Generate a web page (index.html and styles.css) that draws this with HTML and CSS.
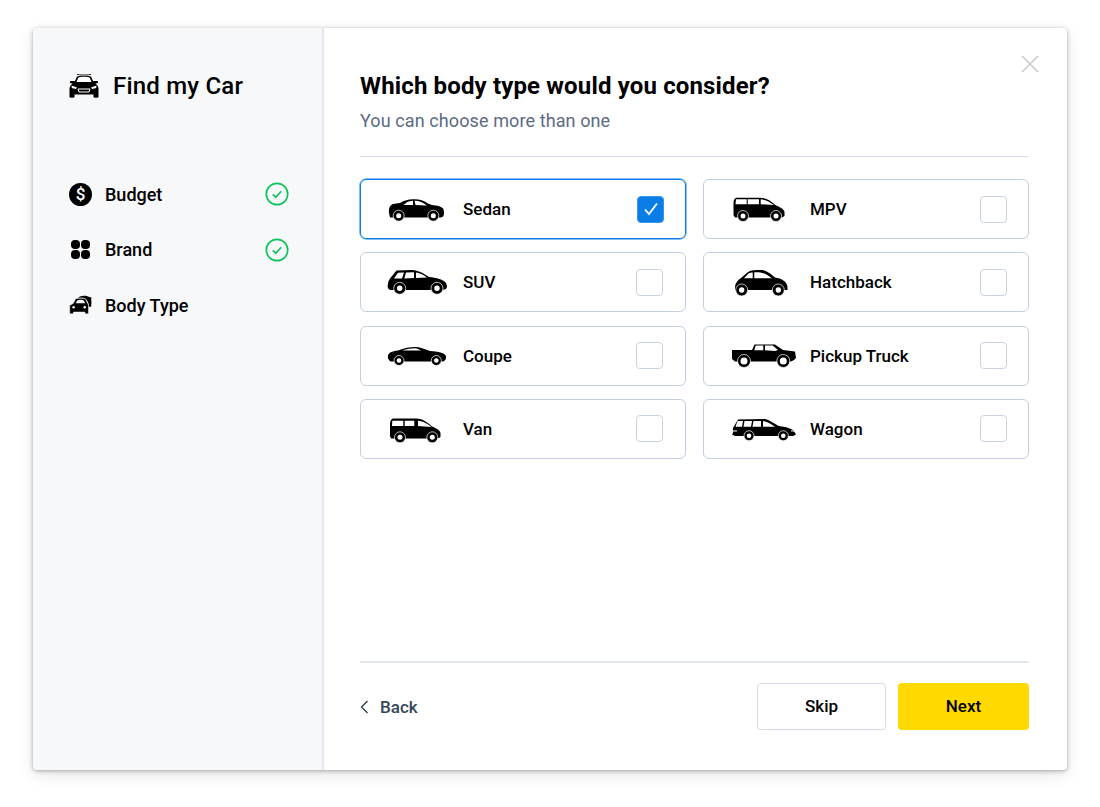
FILE: index.html
```html
<!DOCTYPE html>
<html lang="en">
<head>
  <meta charset="UTF-8" />
  <title>Find my Car</title>
  <link rel="stylesheet" href="styles.css">
</head>
<body>
  <div class="modal">
    <aside class="sidebar">
      <div class="logo">
        <svg class="logo-icon" width="30" height="24" viewBox="0 0 30 24">
          <path d="M6 7 L8 2.5 C10 1 20 1 22 2.5 L24 7 L28 7 C29 7 29.5 8 29 9 L26.5 9.5 C28.5 11 29.5 13 29.5 15 L29.5 23 C29.5 24 24.5 24 24.5 23 L24.5 20.5 L5.5 20.5 L5.5 23 C5.5 24 0.5 24 0.5 23 L0.5 15 C0.5 13 1.5 11 3.5 9.5 L1 9 C0.5 8 1 7 2 7 Z" fill="#000"/>
          <path d="M7.5 8 L9.3 3.5 C11 2.5 19 2.5 20.7 3.5 L22.5 8 Z" fill="#fff"/>
          <path d="M8 0.7 C11 -0.2 19 -0.2 22 0.7" fill="none" stroke="#000" stroke-width="0.8"/>
          <path d="M2.5 11.5 L8 13.5 L7 15 L2.8 14 Z M27.5 11.5 L22 13.5 L23 15 L27.2 14 Z" fill="#fff"/>
          <path d="M9 15 L21 15 L20 18 L10 18 Z" fill="none" stroke="#fff" stroke-width="1"/>
        </svg>
        <span>Find my Car</span>
      </div>

      <nav class="steps">
        <div class="step">
          <span class="step-icon"><span class="dollar">$</span></span>
          <span class="step-label">Budget</span>
          <svg class="step-check" width="24" height="24" viewBox="0 0 24 24">
            <circle cx="12" cy="12" r="10.7" fill="none" stroke="#10c45c" stroke-width="1.7"/>
            <path d="M7.8 12.3 L10.8 15.2 L16.2 9.2" fill="none" stroke="#10c45c" stroke-width="1.7"/>
          </svg>
        </div>
        <div class="step">
          <span class="step-icon">
            <span class="tiles"><i></i><i></i><i></i><i></i></span>
          </span>
          <span class="step-label">Brand</span>
          <svg class="step-check" width="24" height="24" viewBox="0 0 24 24">
            <circle cx="12" cy="12" r="10.7" fill="none" stroke="#10c45c" stroke-width="1.7"/>
            <path d="M7.8 12.3 L10.8 15.2 L16.2 9.2" fill="none" stroke="#10c45c" stroke-width="1.7"/>
          </svg>
        </div>
        <div class="step">
          <span class="step-icon">
            <svg width="26" height="24" viewBox="0 0 26 24">
              <path d="M10 4 C13 1 19 0.8 23 3 L25.5 3.5 L25 6 C25.5 8 25.5 11 25 14 L22.5 14 C22.5 10 21 7 18.5 5 C16 3.5 13 3.5 10 4 Z" fill="#000"/>
              <path d="M5 10 L7.5 5 C10 4 16 4 18.5 5 L21 10 L22 12 L22 22 L18 22 L18 20 L5 20 L5 22 L0.8 22 L0.8 12.5 Z" fill="#000" stroke="#f7f8fa" stroke-width="0.6"/>
              <path d="M7.5 10 L9.3 6.8 C11 6 15 6 16.7 6.8 L18.5 10 Z" fill="#f7f8fa"/>
              <circle cx="5.2" cy="14.5" r="1.4" fill="#f7f8fa"/>
              <circle cx="17.8" cy="14.5" r="1.4" fill="#f7f8fa"/>
            </svg>
          </span>
          <span class="step-label">Body Type</span>
        </div>
      </nav>
    </aside>

    <main class="content">
      <svg class="close" width="18" height="18" viewBox="0 0 18 18">
        <path d="M1 1 L17 17 M17 1 L1 17" stroke="#c9cbce" stroke-width="1.7"/>
      </svg>

      <header class="head">
        <h1>Which body type would you consider?</h1>
        <p>You can choose more than one</p>
      </header>

      <div class="options">
        <div class="option option-selected">
          <svg class="car" width="66" height="32" viewBox="0 0 66 32">
            <path d="M7 20 C6.5 15 8 12 11 11 L18 10 C22 7.5 26 6.3 31 6.3 C37 6 41 7 46 10.5 L50 12 C55 12.5 60 13.5 61.5 16 L62 20 C62 23 61 24 59 24.5 L8 24.5 Z" fill="#000"/>
            <path d="M21.5 12 L25 9.2 C27 8.2 29 7.8 31 7.7 L31 12 Z M32.5 7.7 C37 7.6 41 9.5 45 12.5 L33.5 12 Z" fill="#fff"/>
            <circle cx="16.7" cy="22.7" r="5.5" fill="#000" stroke="#fff"/><circle cx="16.7" cy="22.7" r="2.5" fill="#fff"/>
            <circle cx="51.3" cy="22.7" r="5.5" fill="#000" stroke="#fff"/><circle cx="51.3" cy="22.7" r="2.5" fill="#fff"/>
          </svg>
          <span class="option-label">Sedan</span>
          <span class="box box-checked">
            <svg width="16" height="14" viewBox="0 0 16 14"><path d="M2 7.5 L6 12 L14 1.5" fill="none" stroke="#fff" stroke-width="1.8"/></svg>
          </span>
        </div>

        <div class="option option-right">
          <svg class="car" width="72" height="32" viewBox="0 0 72 32">
            <path d="M8.5 11 C8.5 7 9.5 4.7 12 4.7 L35 4.7 C41 4.7 46 8 51 12.5 C55 14 59 16 59.5 19 L59.5 23 L57 24.5 L10 24.5 L8.5 22 Z" fill="#000"/>
            <path d="M11 6.3 L21.7 6.3 L21.7 11.3 L10.5 11.3 Z M22.7 6.3 L34 6.3 L34 11.3 L22.7 11.3 Z M35.7 6.3 C41 6.5 45 9 49 12 L35.7 11.3 Z" fill="#fff"/>
            <circle cx="18" cy="23" r="5.5" fill="#000" stroke="#fff"/><circle cx="18" cy="23" r="2.5" fill="#fff"/>
            <circle cx="51" cy="23" r="5.5" fill="#000" stroke="#fff"/><circle cx="51" cy="23" r="2.5" fill="#fff"/>
          </svg>
          <span class="option-label">MPV</span>
          <span class="box"></span>
        </div>

        <div class="option">
          <svg class="car" width="66" height="32" viewBox="0 0 66 32">
            <path d="M6 18 C6 15 8 12 10 10 L14.5 4.5 L30 4 C38 4.5 42 8 47 11 C54 11.5 62 13.5 64 17 L65 20 C65 23 63 23.5 61 24 L8 24 C6 23 5 21 6 18 Z" fill="#000"/>
            <path d="M12 12.5 L16 6.8 L22 6.5 L20 12.5 Z M24 6.5 L32 6.2 L32 12 L22.3 12.5 Z M34 6.4 C38 7 42 9 45 11.5 L34 12 Z" fill="#fff"/>
            <circle cx="17.7" cy="22.3" r="6" fill="#000" stroke="#fff"/><circle cx="17.7" cy="22.3" r="2.7" fill="#fff"/>
            <circle cx="55" cy="22.3" r="6" fill="#000" stroke="#fff"/><circle cx="55" cy="22.3" r="2.7" fill="#fff"/>
          </svg>
          <span class="option-label">SUV</span>
          <span class="box"></span>
        </div>

        <div class="option option-right">
          <svg class="car" width="72" height="32" viewBox="0 0 72 32">
            <path d="M10 22 C10 17 13 14 16 12 L23 6 C26 4 31 4 36 4 C41 4 46 8 50 11.5 C56 12.5 62 15 62.5 21 L62.5 24 L10 24 Z" fill="#000"/>
            <path d="M19 12.3 L23.5 7.5 C25 6.7 26.5 6.5 27.7 6.5 L27.7 12.3 Z M29.3 6.3 C36 5.7 41 7.5 46.7 12.3 L29.3 12.3 Z" fill="#fff"/>
            <circle cx="16.7" cy="24" r="6" fill="#000" stroke="#fff"/><circle cx="16.7" cy="24" r="2.7" fill="#fff"/>
            <circle cx="53.3" cy="24" r="6" fill="#000" stroke="#fff"/><circle cx="53.3" cy="24" r="2.7" fill="#fff"/>
          </svg>
          <span class="option-label">Hatchback</span>
          <span class="box"></span>
        </div>

        <div class="option">
          <svg class="car" width="66" height="32" viewBox="0 0 66 32">
            <path d="M6 16 C6 13 10 11 16 10.5 C22 8 28 7 33 7 C38 7 42 9 48 11 C56 11.5 63 13 64 16 C64.5 19 63 21 61 21.5 L9 21.5 C7 21 5.5 18 6 16 Z" fill="#000"/>
            <path d="M20 10.5 C25 9 30 8.3 33 8.3 C35 8.3 37 9.5 39 10.5 Z" fill="#fff"/>
            <circle cx="17" cy="20.5" r="5" fill="#000" stroke="#fff"/><circle cx="17" cy="20.5" r="2.3" fill="#fff"/>
            <circle cx="54.3" cy="20.5" r="5" fill="#000" stroke="#fff"/><circle cx="54.3" cy="20.5" r="2.3" fill="#fff"/>
          </svg>
          <span class="option-label">Coupe</span>
          <span class="box"></span>
        </div>

        <div class="option option-right">
          <svg class="car" width="72" height="32" viewBox="0 0 72 32">
            <path d="M7 10 L27 10 L29.5 4.5 L50 4.5 L58 10 L70 11.5 L71 18 L69 20 L66 21.5 L10 21.5 L7 19 Z" fill="#000"/>
            <path d="M30.7 5.6 L38.3 5.6 L38.3 10.3 L29.3 10.3 Z M40 5.6 L47.5 5.6 L53 10 L50 11 L40 10.3 Z" fill="#fff"/>
            <circle cx="19" cy="21" r="6.5" fill="#000" stroke="#fff"/><circle cx="19" cy="21" r="3.5" fill="#fff"/>
            <circle cx="58.3" cy="21" r="6.5" fill="#000" stroke="#fff"/><circle cx="58.3" cy="21" r="3.5" fill="#fff"/>
          </svg>
          <span class="option-label">Pickup Truck</span>
          <span class="box"></span>
        </div>

        <div class="option">
          <svg class="car" width="66" height="32" viewBox="0 0 66 32">
            <path d="M8 12 C8 8 9 5.5 12 5.5 L34 5.5 C40 5.5 45 9 50 13.5 C54 15 58 17 58.5 20 L58.5 24 L56 25.5 L9 25.5 L8 23 Z" fill="#000"/>
            <path d="M10.3 7.7 L21.3 7.7 L21.3 13 L10 13 Z M22.7 7.7 L32.3 7.7 L32.3 13 L22.7 13 Z M36 7.7 C41 8 46 11 49.5 14 L36 13 Z" fill="#fff"/>
            <circle cx="18" cy="24.3" r="5.5" fill="#000" stroke="#fff"/><circle cx="18" cy="24.3" r="2.5" fill="#fff"/>
            <circle cx="50.3" cy="24.3" r="5.5" fill="#000" stroke="#fff"/><circle cx="50.3" cy="24.3" r="2.5" fill="#fff"/>
          </svg>
          <span class="option-label">Van</span>
          <span class="box"></span>
        </div>

        <div class="option option-right">
          <svg class="car" width="72" height="32" viewBox="0 0 72 32">
            <path d="M8 20 L8 15 L13 6.5 L40 6 C45 7 50 11 54 13 C62 14 69 16 70 20 L71 21.5 L68 23 L10 23 L7 21.5 Z" fill="#000"/>
            <path d="M12.5 8 L18 8 L17 13.7 L10.5 13.7 Z M19.5 8 L27 8 L26 13.7 L18.5 13.7 Z M28.5 8 L36 8 L36 13.7 L27.5 13.7 Z M38 8 C42 8.5 46 11 50 13.7 L38 13.7 Z" fill="#fff"/>
            <path d="M7 18 L12 18 M66 18 L71 18" stroke="#fff"/>
            <circle cx="24" cy="22.7" r="5" fill="#000" stroke="#fff"/><circle cx="24" cy="22.7" r="2.3" fill="#fff"/>
            <circle cx="58.3" cy="22.7" r="5" fill="#000" stroke="#fff"/><circle cx="58.3" cy="22.7" r="2.3" fill="#fff"/>
          </svg>
          <span class="option-label">Wagon</span>
          <span class="box"></span>
        </div>
      </div>

      <footer class="foot">
        <a class="back">
          <svg width="9" height="14" viewBox="0 0 9 14"><path d="M7.5 1 L1.5 7 L7.5 13" fill="none" stroke="#2d3a4c" stroke-width="1.3"/></svg>
          <span>Back</span>
        </a>
        <div class="actions">
          <button type="button" class="btn btn-skip">Skip</button>
          <button type="button" class="btn btn-next">Next</button>
        </div>
      </footer>
    </main>
  </div>
</body>
</html>
```

FILE: styles.css
```css
body {
  font-family: Roboto, 'Liberation Sans', sans-serif;
  background: #fff;
  color: #000;
  margin: 0;
  padding: 28px 33px 37px;
}

.modal {
  display: flex;
  height: 742px;
  background: #fff;
  border-radius: 4px;
  box-shadow: 0 1px 4px rgba(0, 0, 0, 0.3), 0 5px 16px rgba(0, 0, 0, 0.1);
}

/* Left column */
.sidebar {
  box-sizing: border-box;
  width: 291px;
  padding: 46px 33px 0 36px;
  background: #f7f8fa;
  border-right: 2px solid #e2e7ee;
  border-radius: 4px 0 0 4px;
}

.logo {
  display: flex;
  align-items: center;
  gap: 14px;
  height: 24px;
  font-size: 24px;
  font-weight: 500;
  letter-spacing: 0.2px;
}

.logo-icon {
  flex: none;
}

.steps {
  display: flex;
  flex-direction: column;
  gap: 23.5px;
  margin-top: 80px;
}

.step {
  display: flex;
  align-items: center;
  height: 32px;
}

.step-icon {
  display: flex;
  justify-content: center;
  width: 23px;
  margin-right: 13px;
}

.step-label {
  flex: 1;
  font-size: 18px;
  font-weight: 500;
}

.step-check {
  flex: none;
}

.dollar {
  width: 23px;
  height: 23px;
  border-radius: 50%;
  background: #000;
  color: #fff;
  font-size: 17px;
  font-weight: 500;
  line-height: 23px;
  text-align: center;
}

.tiles {
  display: grid;
  grid-template-columns: 9px 9px;
  gap: 1.5px;
}

.tiles i {
  display: block;
  height: 9px;
  background: #000;
  border-radius: 4px;
}

/* Right column */
.content {
  position: relative;
  flex: 1;
  display: flex;
  flex-direction: column;
  padding: 44px 38px 40px 36px;
}

.close {
  position: absolute;
  top: 27px;
  right: 28px;
}

.head {
  padding-bottom: 23px;
  margin-right: 1px;
  border-bottom: 1px solid #d5dde9;
}

.head h1 {
  margin: 0 0 9px;
  font-size: 24px;
  line-height: 28px;
  font-weight: 700;
  letter-spacing: 0.15px;
}

.head p {
  margin: 0;
  font-size: 18px;
  line-height: 24px;
  letter-spacing: 0.1px;
  color: #5b6b84;
}

.options {
  flex: 1;
  display: grid;
  grid-template-columns: 326px 326px;
  grid-auto-rows: 60px;
  column-gap: 17px;
  row-gap: 13.33px;
  align-content: start;
  margin-top: 22px;
}

.option {
  box-sizing: border-box;
  display: flex;
  align-items: center;
  gap: 15px;
  padding: 0 22px 0 21px;
  border: 1px solid #c3cfe0;
  border-radius: 6px;
}

.option-right {
  gap: 13px;
  padding-right: 21px;
}

.option-selected {
  padding-right: 21px;
  border-color: #0a7ee6;
  box-shadow: 0 0 0 0.5px #0a7ee6;
}

.car {
  flex: none;
}

.car circle {
  stroke-width: 0.7;
}

.option-label {
  flex: 1;
  font-size: 17px;
  font-weight: 500;
}

.box {
  box-sizing: border-box;
  display: flex;
  align-items: center;
  justify-content: center;
  width: 27px;
  height: 27px;
  border: 1px solid #c9d3e0;
  border-radius: 4px;
}

.box-checked {
  background: #0a7ee6;
  border-color: #3b96ea;
}

.foot {
  display: flex;
  align-items: center;
  justify-content: space-between;
  padding-top: 20px;
  border-top: 2px solid #e2e7ee;
}

.back {
  display: flex;
  align-items: center;
  gap: 11px;
  font-size: 17px;
  font-weight: 500;
  color: #36455a;
}

.actions {
  display: flex;
  gap: 12px;
}

.btn {
  height: 47px;
  padding: 0 0 2px;
  font-family: inherit;
  font-size: 17px;
  font-weight: 500;
  color: #000;
  border-radius: 4px;
  cursor: pointer;
}

.btn-skip {
  width: 129px;
  background: #fff;
  border: 1px solid #d5dce6;
}

.btn-next {
  width: 131px;
  background: #ffd900;
  border: none;
}
```
